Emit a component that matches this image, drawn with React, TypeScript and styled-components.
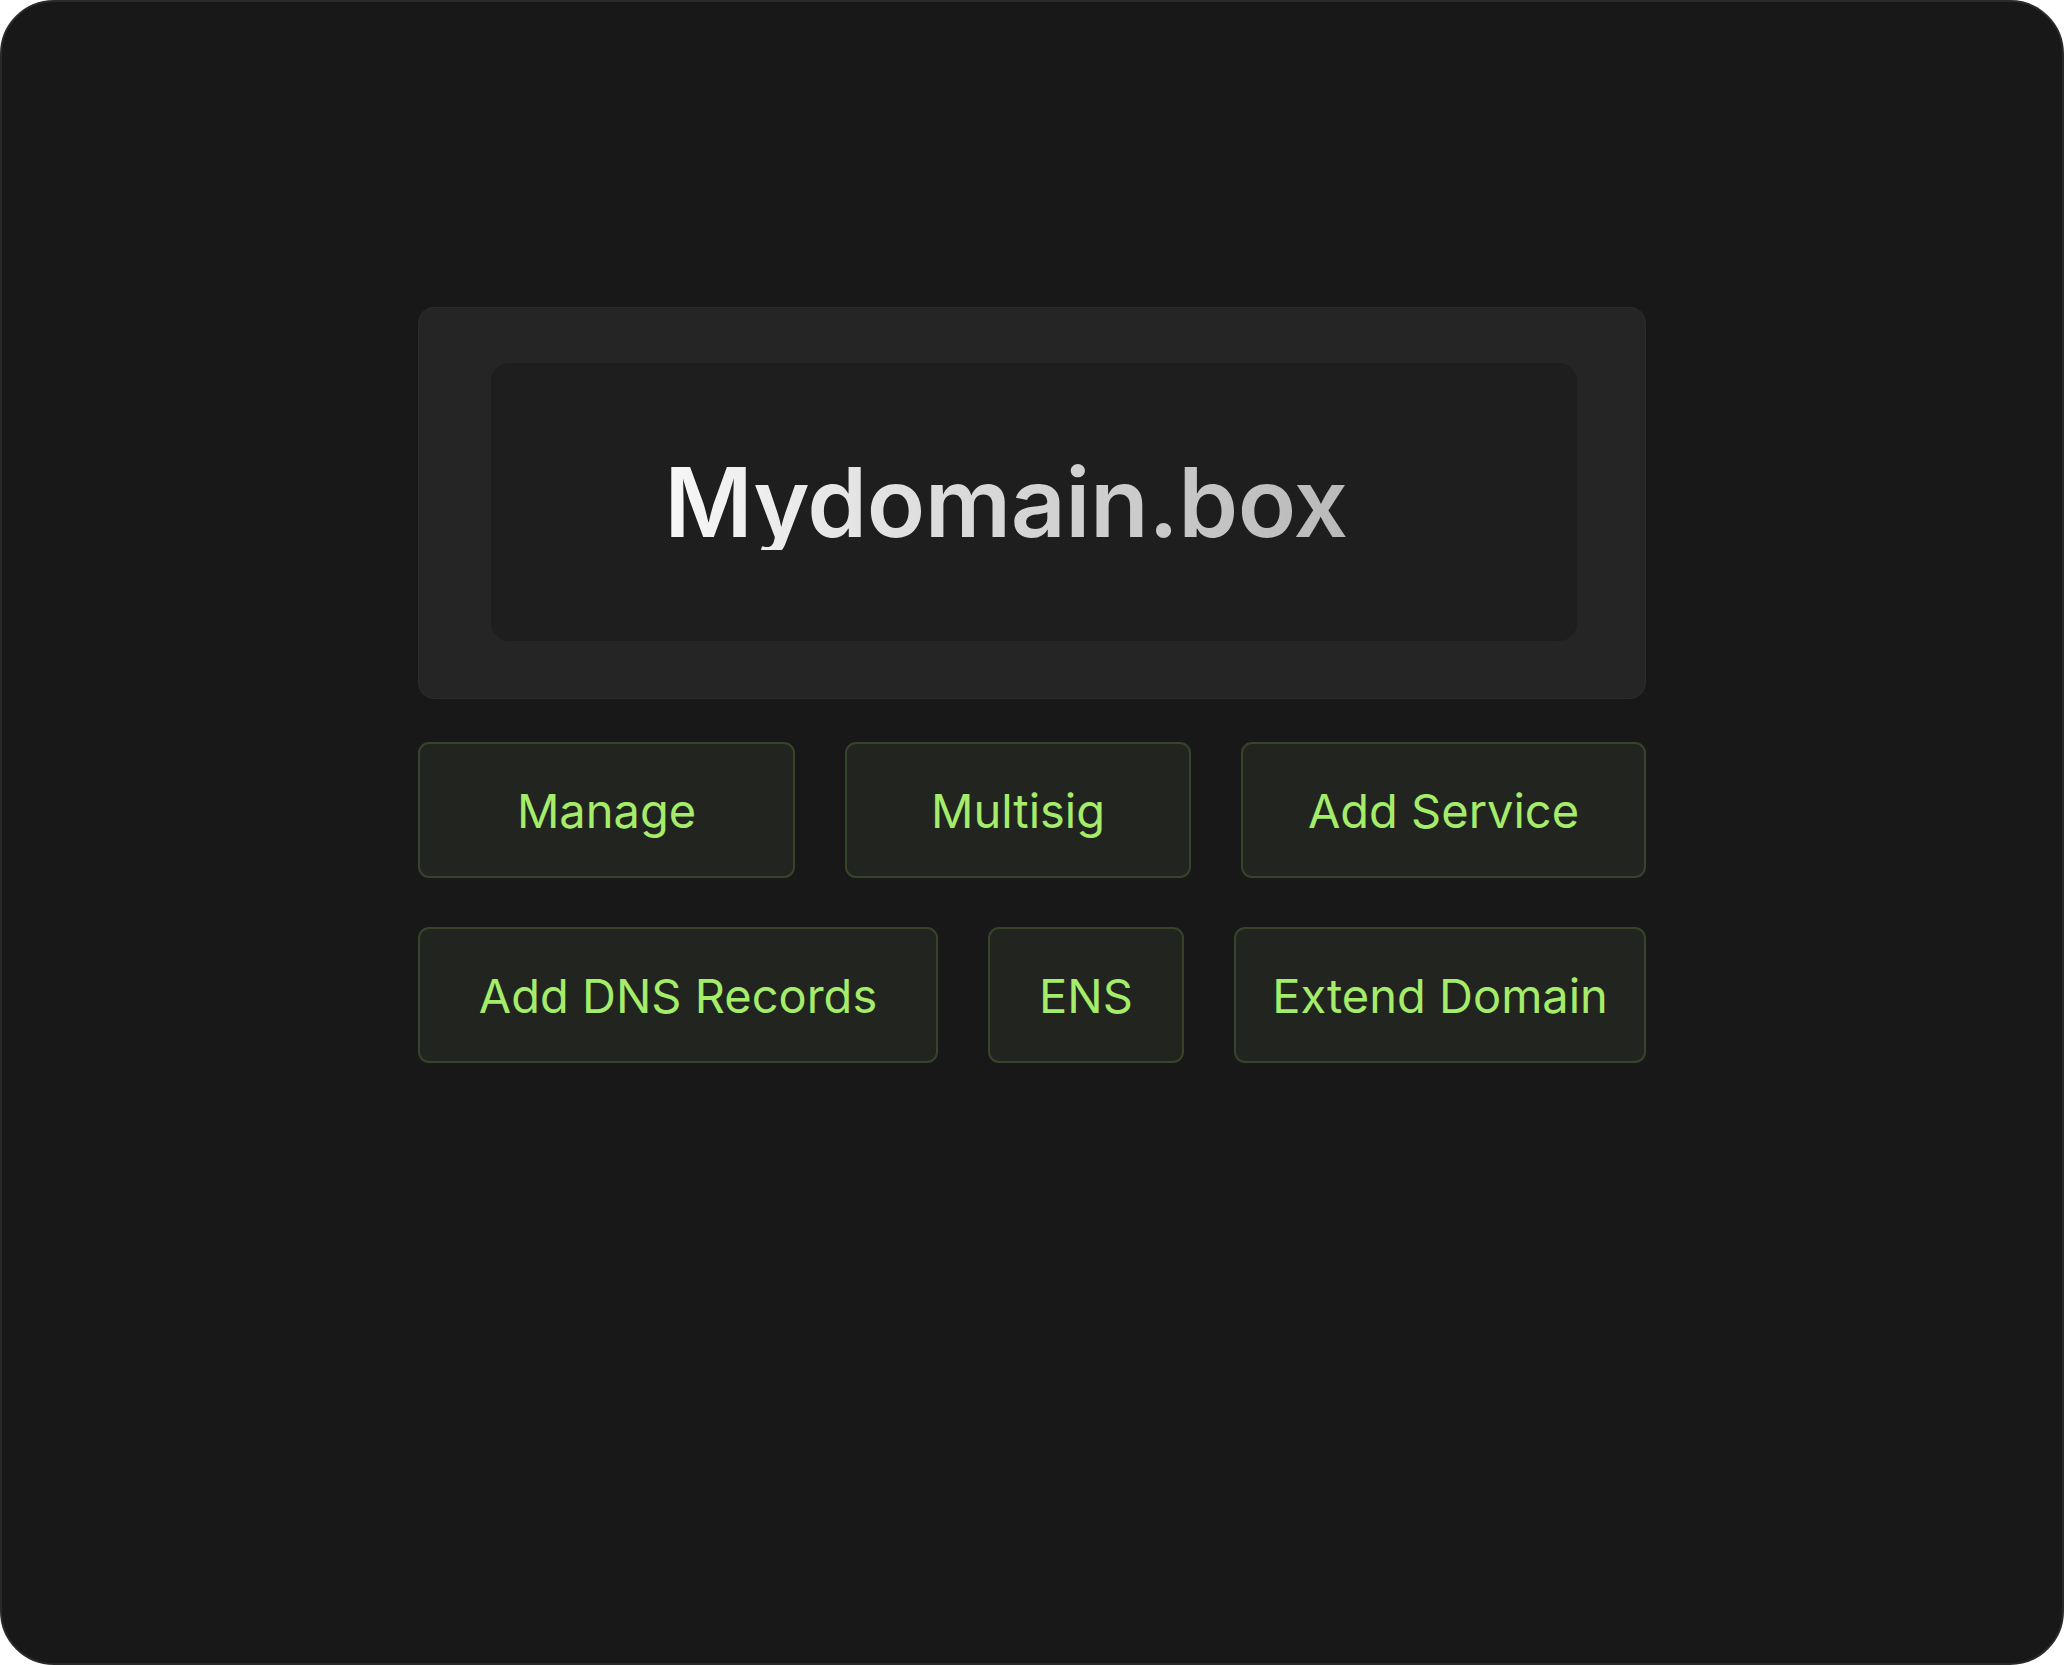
import React from "react";
import styled, { createGlobalStyle } from "styled-components";

const Global = createGlobalStyle`
  html, body { margin: 0; padding: 0; background: #ffffff; }
  body { font-family: Inter, "Noto Sans", sans-serif; }
  * { box-sizing: border-box; }
`;

const Frame = styled.div`
  width: 2064px;
  height: 1665px;
  background: #181818;
  border: 2px solid #2a2a2a;
  border-radius: 54px;
  display: flex;
  justify-content: center;
  padding-top: 305px;
`;

const Column = styled.div`
  width: 1228px;
  display: flex;
  flex-direction: column;
`;

const Panel = styled.div`
  height: 392px;
  background: #252525;
  border: 1px solid #2b2b2b;
  border-radius: 16px;
  padding: 55px 68px 57px 72px;
  display: flex;
`;

const NameBox = styled.div`
  flex: 1;
  background: #1e1e1e;
  border-radius: 18px;
  display: flex;
  align-items: center;
  justify-content: center;
  padding-right: 56px;
`;

const Title = styled.h1`
  margin: 0;
  font-family: Inter, "Noto Sans", sans-serif;
  font-weight: 600;
  font-size: 96px;
  line-height: 1;
  letter-spacing: -0.5px;
  background: linear-gradient(90deg, #f7f7f7 0%, #d9d9d9 45%, #b9b9b9 100%);
  -webkit-background-clip: text;
  background-clip: text;
  color: transparent;
`;

const Row = styled.div<{ $cols: string; $top: number }>`
  display: grid;
  grid-template-columns: ${(p) => p.$cols};
  column-gap: 50px;
  margin-top: ${(p) => p.$top}px;
`;

const ActionButton = styled.button`
  height: 136px;
  background: #22251f;
  border: 2px solid #37442a;
  border-radius: 11px;
  color: #a5ec6b;
  font-family: Inter, "Noto Sans", sans-serif;
  font-weight: 400;
  font-size: 47px;
  display: flex;
  align-items: center;
  justify-content: center;
  padding: 0;
  cursor: pointer;
`;

const rows = [
  { cols: "377fr 346fr 405fr", top: 43, items: ["Manage", "Multisig", "Add Service"] },
  { cols: "520fr 196fr 412fr", top: 49, items: ["Add DNS Records", "ENS", "Extend Domain"] },
];

export default function App() {
  return (
    <>
      <Global />
      <Frame>
        <Column>
          <Panel>
            <NameBox>
              <Title>Mydomain.box</Title>
            </NameBox>
          </Panel>
          {rows.map((r, i) => (
            <Row key={i} $cols={r.cols} $top={r.top}>
              {r.items.map((t) => (
                <ActionButton key={t}>{t}</ActionButton>
              ))}
            </Row>
          ))}
        </Column>
      </Frame>
    </>
  );
}
